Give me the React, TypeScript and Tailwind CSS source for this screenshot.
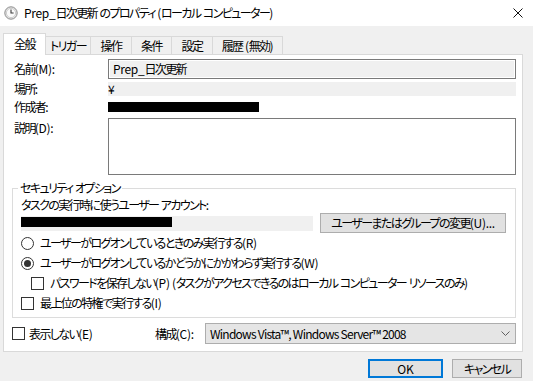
import React from 'react';

const font = "font-['Noto_Sans_CJK_JP','Noto_Sans',sans-serif] [font-feature-settings:'palt'] text-[12px] leading-[16px] text-black";

// Japanese runs get squeezed like Meiryo UI, latin runs stay near normal
const T = ({ children }: { children: string }) => (
    <span className="whitespace-nowrap">
        {children.split(/([\x00-\x7F]+)/).filter(Boolean).map((part, i) =>
            /^[\x00-\x7F]+$/.test(part)
                ? <span key={i} className="tracking-[-0.3px]">{part}</span>
                : <span key={i} className="tracking-[-1.6px]">{part}</span>
        )}
    </span>
);

const Radio = ({ checked }: { checked?: boolean }) => (
    <span className="w-[13px] h-[13px] rounded-full border border-[#333] bg-white flex items-center justify-center shrink-0">
        {checked && <span className="w-[7px] h-[7px] rounded-full bg-[#333]" />}
    </span>
);

const Check = () => (
    <span className="w-[13px] h-[13px] border border-[#333] bg-white shrink-0" />
);

const tabs = ['トリガー', '操作', '条件', '設定', '履歴 (無効)'];
const tabWidths = ['w-[45px]', 'w-[41px]', 'w-[40px]', 'w-[41px]', 'w-[70px]'];

export default function App() {
    return (
        <div className={`w-[533px] h-[381px] bg-[#f0f0f0] flex flex-col overflow-hidden ${font}`}>
            {/* Title bar */}
            <div className="h-[26px] bg-white flex items-center shrink-0">
                <svg width="14" height="14" viewBox="0 0 14 14" className="ml-[4px]">
                    <circle cx="7" cy="7" r="6.2" fill="#e8e8e8" stroke="#8a8a8a" strokeWidth="1" />
                    <circle cx="7" cy="7" r="4.6" fill="#fafafa" stroke="#b5b5b5" strokeWidth="0.6" />
                    <path d="M7 3.6 V7 H9.6" fill="none" stroke="#3a3a3a" strokeWidth="1.1" />
                </svg>
                <span className="ml-[6px]"><T>Prep_日次更新 のプロパティ (ローカル コンピューター)</T></span>
                <svg width="10" height="10" viewBox="0 0 10 10" className="ml-auto mr-[10px]">
                    <path d="M0.5 0.5 L9.5 9.5 M9.5 0.5 L0.5 9.5" stroke="#111" strokeWidth="1" />
                </svg>
            </div>

            {/* Tabs */}
            <div className="mt-[7px] ml-[3px] h-[22px] flex items-end relative z-10 shrink-0">
                <div className="h-[22px] w-[43px] bg-white border border-b-0 border-[#d9d9d9] flex items-start justify-center pt-[2px]">
                    <T>全般</T>
                </div>
                {tabs.map((t, i) => (
                    <div
                        key={t}
                        className={`h-[18px] mb-[1px] ${tabWidths[i]} bg-[#f0f0f0] border border-l-0 border-b-0 border-[#d9d9d9] flex items-center justify-center`}
                    >
                        <T>{t}</T>
                    </div>
                ))}
            </div>

            {/* Panel */}
            <div className="-mt-[1px] ml-[3px] w-[520px] h-[298px] bg-white border border-[#d9d9d9] flex flex-col shrink-0">
                <div className="pl-[10px] pt-[4px] grid grid-cols-[94px_408px]">
                    <div className="h-[20px] flex items-center"><T>名前(M):</T></div>
                    <div className="h-[20px] border border-[#7a7a7a] bg-[#f0f0f0] shadow-[inset_0_0_0_1px_#fff] flex items-center pl-[4px]">
                        <T>Prep_日次更新</T>
                    </div>

                    <div className="mt-[3px] h-[14px] flex items-center"><T>場所:</T></div>
                    <div className="mt-[3px] h-[14px] bg-[#f0f0f0] flex items-center">¥</div>

                    <div className="mt-[3px] h-[16px] flex items-center"><T>作成者:</T></div>
                    <div className="mt-[3px] h-[16px] flex items-center">
                        <div className="w-[151px] h-[10px] bg-black" />
                    </div>

                    <div className="mt-[3px] pt-[2px]"><T>説明(D):</T></div>
                    <div className="mt-[3px] h-[57px] border border-[#7a7a7a] bg-white" />
                </div>

                {/* Security options */}
                <fieldset className="mt-[5px] ml-[8px] w-[504px] border border-[#dcdcdc] pb-[4px]">
                    <legend className="ml-[5px] px-[2px] leading-[16px]"><T>セキュリティ オプション</T></legend>
                    <div className="pl-[8px] mt-[1px] h-[16px] flex items-center"><T>タスクの実行時に使うユーザー アカウント:</T></div>
                    <div className="pl-[8px] h-[20px] flex items-center">
                        <div className="w-[292px] h-[15px] bg-[#f0f0f0] flex items-start">
                            <div className="w-[151px] h-[10px] mt-[1px] bg-black" />
                        </div>
                        <div className="ml-[7px] w-[186px] h-[20px] bg-[#e1e1e1] border border-[#adadad] flex items-center justify-center">
                            <T>ユーザーまたはグループの変更(U)...</T>
                        </div>
                    </div>
                    <div className="pl-[8px] h-[20px] flex items-center gap-[6px]">
                        <Radio />
                        <T>ユーザーがログオンしているときのみ実行する(R)</T>
                    </div>
                    <div className="pl-[8px] h-[20px] flex items-center gap-[6px]">
                        <Radio checked />
                        <T>ユーザーがログオンしているかどうかにかかわらず実行する(W)</T>
                    </div>
                    <div className="pl-[18px] h-[20px] flex items-center gap-[6px]">
                        <Check />
                        <T>パスワードを保存しない(P) (タスクがアクセスできるのはローカル コンピューター リソースのみ)</T>
                    </div>
                    <div className="pl-[8px] h-[20px] flex items-center gap-[6px]">
                        <Check />
                        <T>最上位の特権で実行する(I)</T>
                    </div>
                </fieldset>

                {/* Hidden / configure */}
                <div className="mt-[5px] pl-[8px] h-[21px] flex items-center">
                    <div className="w-[143px] flex items-center gap-[4px]">
                        <Check />
                        <T>表示しない(E)</T>
                    </div>
                    <div className="w-[50px]"><T>構成(C):</T></div>
                    <div className="w-[311px] h-[21px] bg-[#e5e5e5] border border-[#adadad] flex items-center pl-[4px] pr-[5px] tracking-[-0.75px]">
                        <span>Windows Vista™, Windows Server™ 2008</span>
                        <svg width="9" height="5" viewBox="0 0 9 5" className="ml-auto">
                            <path d="M0.5 0.5 L4.5 4.5 L8.5 0.5" fill="none" stroke="#606060" strokeWidth="1" />
                        </svg>
                    </div>
                </div>
            </div>

            {/* Buttons */}
            <div className="mt-[7px] flex justify-end pr-[11px] gap-[9px] shrink-0">
                <div className="w-[75px] h-[19px] bg-[#e1e1e1] border-2 border-[#0078d7] flex items-center justify-center">OK</div>
                <div className="w-[70px] h-[19px] bg-[#e1e1e1] border border-[#adadad] flex items-center justify-center"><T>キャンセル</T></div>
            </div>
        </div>
    );
}
